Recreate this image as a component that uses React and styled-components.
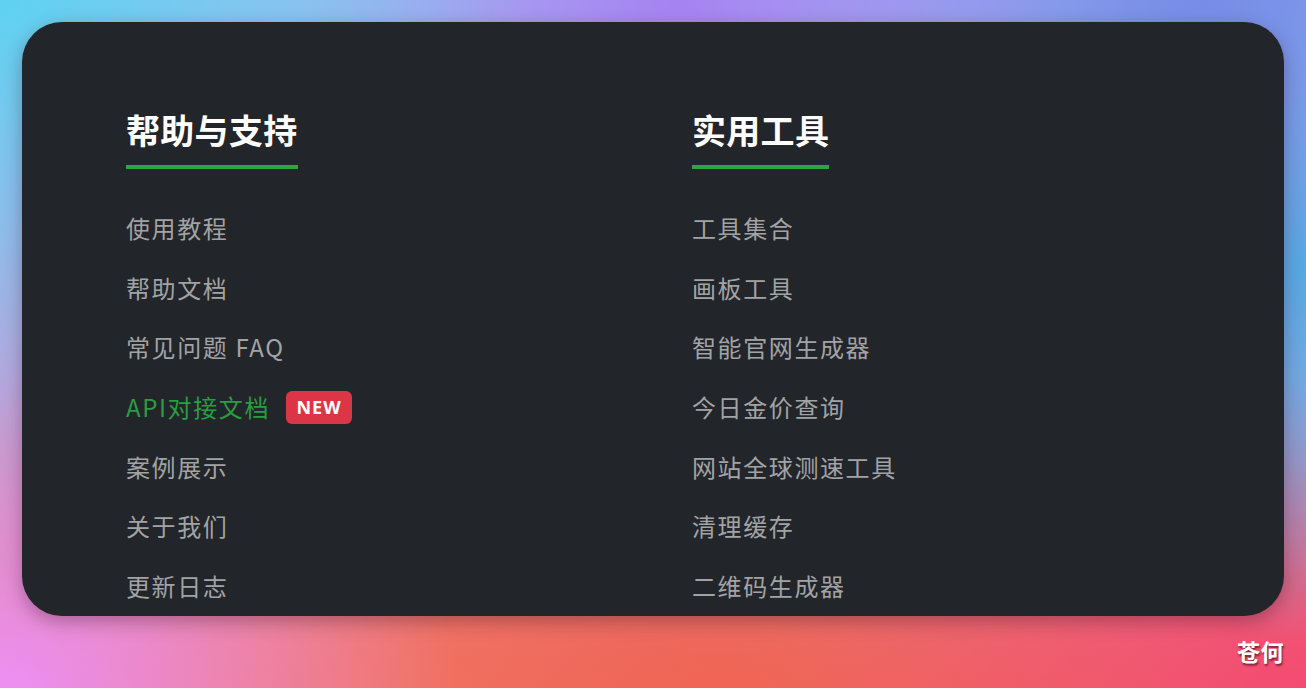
import React from "react";
import styled, { createGlobalStyle } from "styled-components";

const GlobalStyle = createGlobalStyle`
  html, body {
    margin: 0;
    padding: 0;
  }
  body {
    font-family: "Noto Sans CJK SC", "Noto Sans", sans-serif;
    width: 1306px;
    height: 688px;
    overflow: hidden;
  }
  * { box-sizing: border-box; }
`;

const Page = styled.div`
  width: 1306px;
  height: 688px;
  padding: 22px 22px 0;
  display: flex;
  flex-direction: column;
  background:
    radial-gradient(ellipse 40% 55% at 0% 0%, rgba(95, 210, 242, 1) 0%, rgba(95, 210, 242, 0) 100%),
    radial-gradient(ellipse 30% 40% at 52% 0%, rgba(166, 130, 242, 1) 0%, rgba(166, 130, 242, 0) 100%),
    radial-gradient(ellipse 35% 40% at 92% 0%, rgba(118, 140, 232, 1) 0%, rgba(118, 140, 232, 0) 100%),
    radial-gradient(ellipse 25% 55% at 100% 38%, rgba(85, 168, 226, 1) 0%, rgba(85, 168, 226, 0) 100%),
    radial-gradient(ellipse 35% 45% at 0% 100%, rgba(236, 144, 246, 1) 0%, rgba(236, 144, 246, 0) 100%),
    radial-gradient(ellipse 40% 45% at 100% 100%, rgba(244, 74, 114, 1) 0%, rgba(244, 74, 114, 0) 100%),
    radial-gradient(ellipse 50% 45% at 55% 100%, rgba(240, 100, 85, 1) 0%, rgba(240, 100, 85, 0) 100%),
    radial-gradient(ellipse 30% 40% at 30% 100%, rgba(242, 130, 108, 1) 0%, rgba(242, 130, 108, 0) 100%),
    linear-gradient(180deg, #a6b8ee 0%, #b2a8de 55%, #ea7670 100%);
`;

const Card = styled.div`
  height: 594px;
  flex-shrink: 0;
  background: #222529;
  border-radius: 40px;
  overflow: hidden;
  padding: 87px 0 0 104px;
  display: grid;
  grid-template-columns: 566px 1fr;
  align-items: start;
  box-shadow: 0 6px 18px rgba(60, 20, 40, 0.35);
`;

const Column = styled.section`
  display: flex;
  flex-direction: column;
  align-items: flex-start;
`;

const Heading = styled.h2`
  margin: 0;
  display: inline-block;
  font-size: 34px;
  line-height: 41px;
  font-weight: 700;
  color: #ffffff;
  letter-spacing: 0.3px;
  padding-bottom: 15px;
  border-bottom: 4px solid #28a745;
`;

const LinkList = styled.ul`
  list-style: none;
  margin: 41px 0 0;
  padding: 0;
  display: flex;
  flex-direction: column;
  gap: 23.7px;
`;

const Item = styled.li`
  display: flex;
  align-items: center;
  font-size: 24px;
  line-height: 36px;
  height: 36px;
  color: ${(p) => (p.$highlight ? "#2a9d42" : "#a2a3a5")};
  letter-spacing: 1.6px;
  white-space: nowrap;
`;

const Badge = styled.span`
  display: inline-flex;
  align-items: center;
  justify-content: center;
  margin-left: 16px;
  width: 66px;
  height: 33px;
  border-radius: 6px;
  background: #dc3545;
  color: #ffffff;
  font-family: "Noto Sans", "Open Sans", sans-serif;
  font-size: 18px;
  font-weight: 700;
  letter-spacing: 1px;
`;

const Footer = styled.div`
  display: flex;
  justify-content: flex-end;
  padding-top: 20px;
`;

const Signature = styled.span`
  font-size: 23px;
  line-height: 30px;
  font-weight: 700;
  color: #ffffff;
  letter-spacing: 0.5px;
  text-shadow: 1px 2px 2px rgba(80, 20, 30, 0.75);
`;

const help = [
  { label: "使用教程" },
  { label: "帮助文档" },
  { label: "常见问题 FAQ" },
  { label: "API对接文档", highlight: true, badge: "NEW" },
  { label: "案例展示" },
  { label: "关于我们" },
  { label: "更新日志" },
];

const tools = [
  { label: "工具集合" },
  { label: "画板工具" },
  { label: "智能官网生成器" },
  { label: "今日金价查询" },
  { label: "网站全球测速工具" },
  { label: "清理缓存" },
  { label: "二维码生成器" },
];

function LinkColumn({ title, items }) {
  return (
    <Column>
      <Heading>{title}</Heading>
      <LinkList>
        {items.map((it) => (
          <Item key={it.label} $highlight={it.highlight}>
            {it.label}
            {it.badge && <Badge>{it.badge}</Badge>}
          </Item>
        ))}
      </LinkList>
    </Column>
  );
}

export default function App() {
  return (
    <>
      <GlobalStyle />
      <Page>
        <Card>
          <LinkColumn title="帮助与支持" items={help} />
          <LinkColumn title="实用工具" items={tools} />
        </Card>
        <Footer>
          <Signature>苍何</Signature>
        </Footer>
      </Page>
    </>
  );
}
